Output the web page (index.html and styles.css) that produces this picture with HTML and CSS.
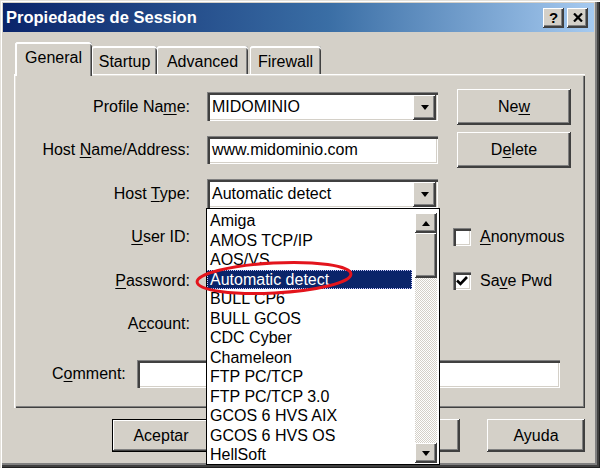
FILE: index.html
```html
<!DOCTYPE html>
<html lang="es">
<head>
 <meta charset="UTF-8">
 <meta name="viewport" content="width=device-width, initial-scale=1.0">
 <title>Propiedades de Session</title>
 <link rel="stylesheet" href="styles.css">
</head>
<body>
 <div class="window">
  <div class="titlebar">
   <span class="title">Propiedades de Session</span>
   <div class="title-buttons">
    <span class="tb-btn raised">?</span>
    <span class="tb-btn raised">
     <svg width="10" height="9" viewBox="0 0 10 9"><path d="M1 0.5 L9 8.5 M9 0.5 L1 8.5" stroke="#000" stroke-width="2.2"/></svg>
    </span>
   </div>
  </div>

  <div class="content">
   <div class="tabs">
    <div class="tab active" style="width:77px">General</div>
    <div class="tab" style="width:65px">Startup</div>
    <div class="tab" style="width:91px">Advanced</div>
    <div class="tab tab-last" style="width:71px">Firewall</div>
   </div>

   <div class="panel">
    <div class="fields">
     <label class="lbl">Profile Na<u>m</u>e:</label>
     <div class="combo sunken">
      <span class="combo-text">MIDOMINIO</span>
      <span class="arrow-btn raised"><i class="tri-down"></i></span>
     </div>
     <button class="side-btn raised">Ne<u>w</u></button>

     <label class="lbl">Host <u>N</u>ame/Address:</label>
     <div class="field sunken">www.midominio.com</div>
     <button class="side-btn raised">D<u>e</u>lete</button>

     <label class="lbl">Host <u>T</u>ype:</label>
     <div class="combo sunken host-type">
      <span class="combo-text">Automatic detect</span>
      <span class="arrow-btn raised"><i class="tri-down"></i></span>

      <div class="dropdown">
       <ul class="items">
        <li>Amiga</li>
        <li>AMOS TCP/IP</li>
        <li>AOS/VS</li>
        <li class="selected">Automatic detect</li>
        <li>BULL CP6</li>
        <li>BULL GCOS</li>
        <li>CDC Cyber</li>
        <li>Chameleon</li>
        <li>FTP PC/TCP</li>
        <li>FTP PC/TCP 3.0</li>
        <li>GCOS 6 HVS AIX</li>
        <li>GCOS 6 HVS OS</li>
        <li>HellSoft</li>
       </ul>
       <div class="scrollbar">
        <span class="sb-btn raised"><i class="tri-up"></i></span>
        <span class="sb-thumb raised"></span>
        <span class="sb-track"></span>
        <span class="sb-btn raised"><i class="tri-down"></i></span>
       </div>
       <svg class="mark" width="160" height="38" viewBox="0 0 160 38">
        <ellipse cx="80" cy="19" rx="77" ry="15" transform="rotate(-3 80 19)" fill="none" stroke="#e3141c" stroke-width="3"/>
       </svg>
      </div>
     </div>
     <span></span>

     <label class="lbl"><u>U</u>ser ID:</label>
     <div class="field sunken"></div>
     <div class="check-row">
      <span class="check sunken"></span>
      <span><u>A</u>nonymous</span>
     </div>

     <label class="lbl"><u>P</u>assword:</label>
     <div class="field sunken"></div>
     <div class="check-row">
      <span class="check sunken">
       <svg width="14" height="14" viewBox="0 0 14 14"><path d="M2 6.5 L5.5 10 L12 3" fill="none" stroke="#000" stroke-width="2.6"/></svg>
      </span>
      <span>Sa<u>v</u>e Pwd</span>
     </div>

     <label class="lbl">A<u>c</u>count:</label>
     <div class="field sunken"></div>
     <span></span>
    </div>

    <div class="comment-row">
     <label class="comment-lbl">C<u>o</u>mment:</label>
     <div class="field sunken comment-field"></div>
    </div>
   </div>

   <div class="actions">
    <button class="act-btn raised default">Aceptar</button>
    <button class="act-btn raised" aria-label="Cancelar"></button>
    <button class="act-btn raised" aria-label="Aplicar"></button>
    <button class="act-btn raised">Ayuda</button>
   </div>
  </div>
 </div>
</body>
</html>
```

FILE: styles.css
```css
* {
box-sizing: border-box;
}
body {
margin: 0;
font-family: "Liberation Sans", Arial, sans-serif;
font-size: 16px;
color: #000;
}
u {
text-decoration-thickness: 1px;
text-underline-offset: 2px;
}
.window {
position: relative;
width: 600px;
height: 468px;
overflow: hidden;
background: #d4d0c8;
padding: 3px 6px 0 3px;
box-shadow: inset 1px 1px #e4e1db, inset 2px 2px #fff, inset -1px -1px #202020, inset -3px -3px #404040, inset -5px -5px #808080;
}

/* title bar */
.titlebar {
height: 29px;
display: flex;
align-items: center;
justify-content: space-between;
padding: 0 6px 0 3px;
background: linear-gradient(to right, #0a246a, #3a6ea5 55%, #a6caf0);
}
.title {
color: #fff;
font-weight: bold;
font-size: 16.5px;
}
.title-buttons {
display: flex;
gap: 3px;
}
.tb-btn {
width: 21px;
height: 20px;
display: flex;
align-items: center;
justify-content: center;
font-weight: bold;
font-size: 15px;
}

/* shared bevels */
.raised {
background: #d4d0c8;
box-shadow: inset -1px -1px #404040, inset 1px 1px #fff, inset -2px -2px #404040, inset -3px -3px #808080;
}
.sunken {
background: #fff;
box-shadow: inset 1px 1px #808080, inset 3px 3px #404040, inset -1px -1px #fff, inset -2px -2px #d4d0c8;
}
.tri-down, .tri-up {
width: 0;
height: 0;
border-left: 4.5px solid transparent;
border-right: 4.5px solid transparent;
}
.tri-down {
border-top: 5px solid #000;
}
.tri-up {
border-bottom: 5px solid #000;
}

.content {
padding: 10px 9px 0 11px;
}

/* tabs */
.tabs {
display: flex;
align-items: flex-end;
height: 32px;
margin-left: 1px;
position: relative;
z-index: 1;
}
.tab {
height: 28px;
display: flex;
align-items: center;
justify-content: center;
padding-top: 3px;
border-radius: 3px 3px 0 0;
background: #d4d0c8;
box-shadow: inset 0 2px #fff, inset 1px 0 #fff, inset -1px 0 #404040, inset -2px 0 #808080;
}
.tab-last {
margin-left: 2px;
}
.tab.active {
height: 34px;
margin-bottom: -2px;
padding-top: 0;
padding-bottom: 2px;
box-shadow: inset 0 2px #fff, inset 2px 0 #fff, inset -1px 0 #404040, inset -2px 0 #808080;
}

/* panel */
.panel {
height: 334px;
padding: 11px 0 0 2px;
box-shadow: inset 1px 1px #fff, inset 2px 2px #e4e1db, inset -1px -1px #404040, inset -2px -2px #808080;
}
.fields {
display: grid;
grid-template-columns: 174px 231px 116px;
column-gap: 17px;
grid-auto-rows: 43.5px;
align-items: center;
}
.lbl {
text-align: right;
white-space: nowrap;
}
.field {
height: 28px;
line-height: 28px;
padding-left: 5px;
}
.combo {
height: 29px;
display: flex;
align-items: center;
padding: 2px 2px 2px 3px;
}
.combo-text {
flex: 1;
padding-left: 2px;
padding-top: 1px;
}
.arrow-btn {
width: 23px;
height: 25px;
display: flex;
align-items: center;
justify-content: center;
margin-top: 1px;
}
.side-btn {
margin-left: 2px;
height: 36px;
border: none;
font: inherit;
color: #000;
padding: 0;
}

/* checkboxes */
.check-row {
display: flex;
align-items: center;
gap: 9px;
margin-left: -2px;
}
.check {
width: 18px;
height: 18px;
display: flex;
align-items: center;
justify-content: center;
}

/* open list of host types */
.host-type {
position: relative;
}
.dropdown {
position: absolute;
left: -1px;
top: 100%;
width: 234px;
height: 257px;
background: #fff;
border: 1px solid #000;
display: flex;
z-index: 5;
}
.items {
list-style: none;
margin: 2px 3px 0 0;
padding: 0;
flex: 1;
overflow: hidden;
}
.items li {
height: 19.5px;
line-height: 19.5px;
padding-left: 3px;
white-space: nowrap;
}
.items li.selected {
background: #0a246a;
color: #fff;
outline: 1px dotted #c8c8ff;
outline-offset: -1px;
}
.scrollbar {
width: 22px;
margin: 4px 2px 1px 0;
display: flex;
flex-direction: column;
}
.sb-btn {
height: 20px;
display: flex;
align-items: center;
justify-content: center;
}
.sb-thumb {
height: 45px;
}
.sb-track {
flex: 1;
background: repeating-conic-gradient(#d4d0c8 0 25%, #fff 0 50%) 0 0 / 2px 2px;
}
.mark {
position: absolute;
left: -13px;
top: 50px;
pointer-events: none;
}

/* comment */
.comment-row {
display: flex;
align-items: center;
gap: 15px;
margin-top: 14px;
padding-left: 36px;
}
.comment-lbl {
width: 70px;
}
.comment-field {
width: 423px;
}

/* bottom buttons */
.actions {
display: flex;
justify-content: flex-end;
gap: 27px;
margin-top: 11px;
}
.act-btn {
width: 98px;
height: 33px;
border: none;
font: inherit;
color: #000;
padding: 0;
}
.act-btn.default {
box-shadow: inset 0 0 0 1px #000, inset -2px -2px #404040, inset 2px 2px #fff, inset -3px -3px #808080;
}
```
